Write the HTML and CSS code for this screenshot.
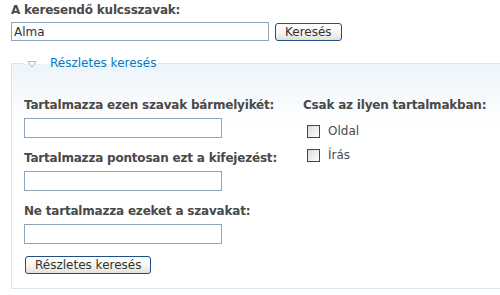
FILE: index.html
```html
<!DOCTYPE html>
<html>
<head>
    <title>Keresés</title>
    <link rel="stylesheet" href="styles.css">
</head>
<body>
    <form class="search-form">
        <div class="basic">
            <label for="keys" class="label">A keresendő kulcsszavak:</label>
            <div class="basic-row">
                <input type="text" id="keys" class="input-field wide" value="Alma">
                <button type="button" class="btn">Keresés</button>
            </div>
        </div>

        <fieldset class="advanced">
            <legend class="legend">
                <span class="toggle"><svg width="10" height="8" viewBox="0 0 10 8"><path d="M1 1.5 H9 L5 7 Z" fill="#fff" stroke="#b4b8bc" stroke-width="1"/></svg></span>
                <a href="#" class="legend-link">Részletes keresés</a>
            </legend>

            <div class="columns">
                <div class="col-left">
                    <div class="group">
                        <label class="label" for="or">Tartalmazza ezen szavak bármelyikét:</label>
                        <input type="text" id="or" class="input-field">
                    </div>
                    <div class="group">
                        <label class="label" for="phrase">Tartalmazza pontosan ezt a kifejezést:</label>
                        <input type="text" id="phrase" class="input-field">
                    </div>
                    <div class="group">
                        <label class="label" for="neg">Ne tartalmazza ezeket a szavakat:</label>
                        <input type="text" id="neg" class="input-field">
                    </div>
                    <button type="button" class="btn">Részletes keresés</button>
                </div>

                <div class="col-right">
                    <div class="label">Csak az ilyen tartalmakban:</div>
                    <label class="check"><span class="box"></span>Oldal</label>
                    <label class="check"><span class="box"></span>Írás</label>
                </div>
            </div>
        </fieldset>
    </form>
</body>
</html>
```

FILE: styles.css
```css
body {
    margin: 0;
    background: #fff;
    font-family: "DejaVu Sans", Verdana, sans-serif;
    font-size: 12px;
    color: #494949;
    overflow: hidden;
}

.search-form {
    padding: 2px 0 0 11px;
}

.label {
    display: block;
    font-weight: bold;
    line-height: 16px;
    letter-spacing: -0.2px;
    color: #494949;
}

.basic-row {
    display: flex;
    align-items: center;
    gap: 6px;
    margin-top: 4px;
}

.input-field {
    display: block;
    box-sizing: border-box;
    width: 198px;
    height: 20px;
    border: 1px solid #8ea6bd;
    padding: 0 2px;
    font-family: "DejaVu Sans", Verdana, sans-serif;
    font-size: 12px;
    color: #333;
    background: #fff;
    margin: 5px 0 0 0;
}

.wide {
    width: 258px;
    height: 19px;
    margin: 0;
}

.btn {
    box-sizing: border-box;
    height: 18px;
    padding: 0 9px;
    border: 1px solid #1f4f86;
    border-radius: 3px;
    background: linear-gradient(#ffffff, #f4f3ee 60%, #e3e1d6);
    font-family: "DejaVu Sans", Verdana, sans-serif;
    font-size: 12px;
    line-height: 14px;
    color: #333;
}

.advanced {
    box-sizing: border-box;
    width: 489px;
    margin: 15px 0 0 0;
    padding: 26px 0 14px 12px;
    border: 1px solid #d9e6f0;
    border-right: none;
    background: linear-gradient(#edf4f9, #ffffff 60px);
}

.legend {
    display: flex;
    align-items: center;
    padding: 0 2px 0 3px;
    margin-left: 0;
}

.toggle {
    display: inline-block;
    width: 23px;
    line-height: 0;
}

.legend-link {
    color: #027ac6;
    text-decoration: none;
    font-size: 12px;
    line-height: 15px;
}

.columns {
    display: flex;
}

.col-left {
    width: 279px;
}

.group {
    margin-bottom: 12px;
}

.col-left .btn {
    display: block;
    margin-left: 1px;
}

.check {
    display: flex;
    align-items: center;
    gap: 8px;
    margin-left: 4px;
    line-height: 24px;
}

.check:first-of-type {
    margin-top: 6px;
}

.box {
    box-sizing: border-box;
    width: 13px;
    height: 13px;
    border: 1px solid #1c5180;
    background: linear-gradient(135deg, #dcdcd6, #ffffff);
}
```
